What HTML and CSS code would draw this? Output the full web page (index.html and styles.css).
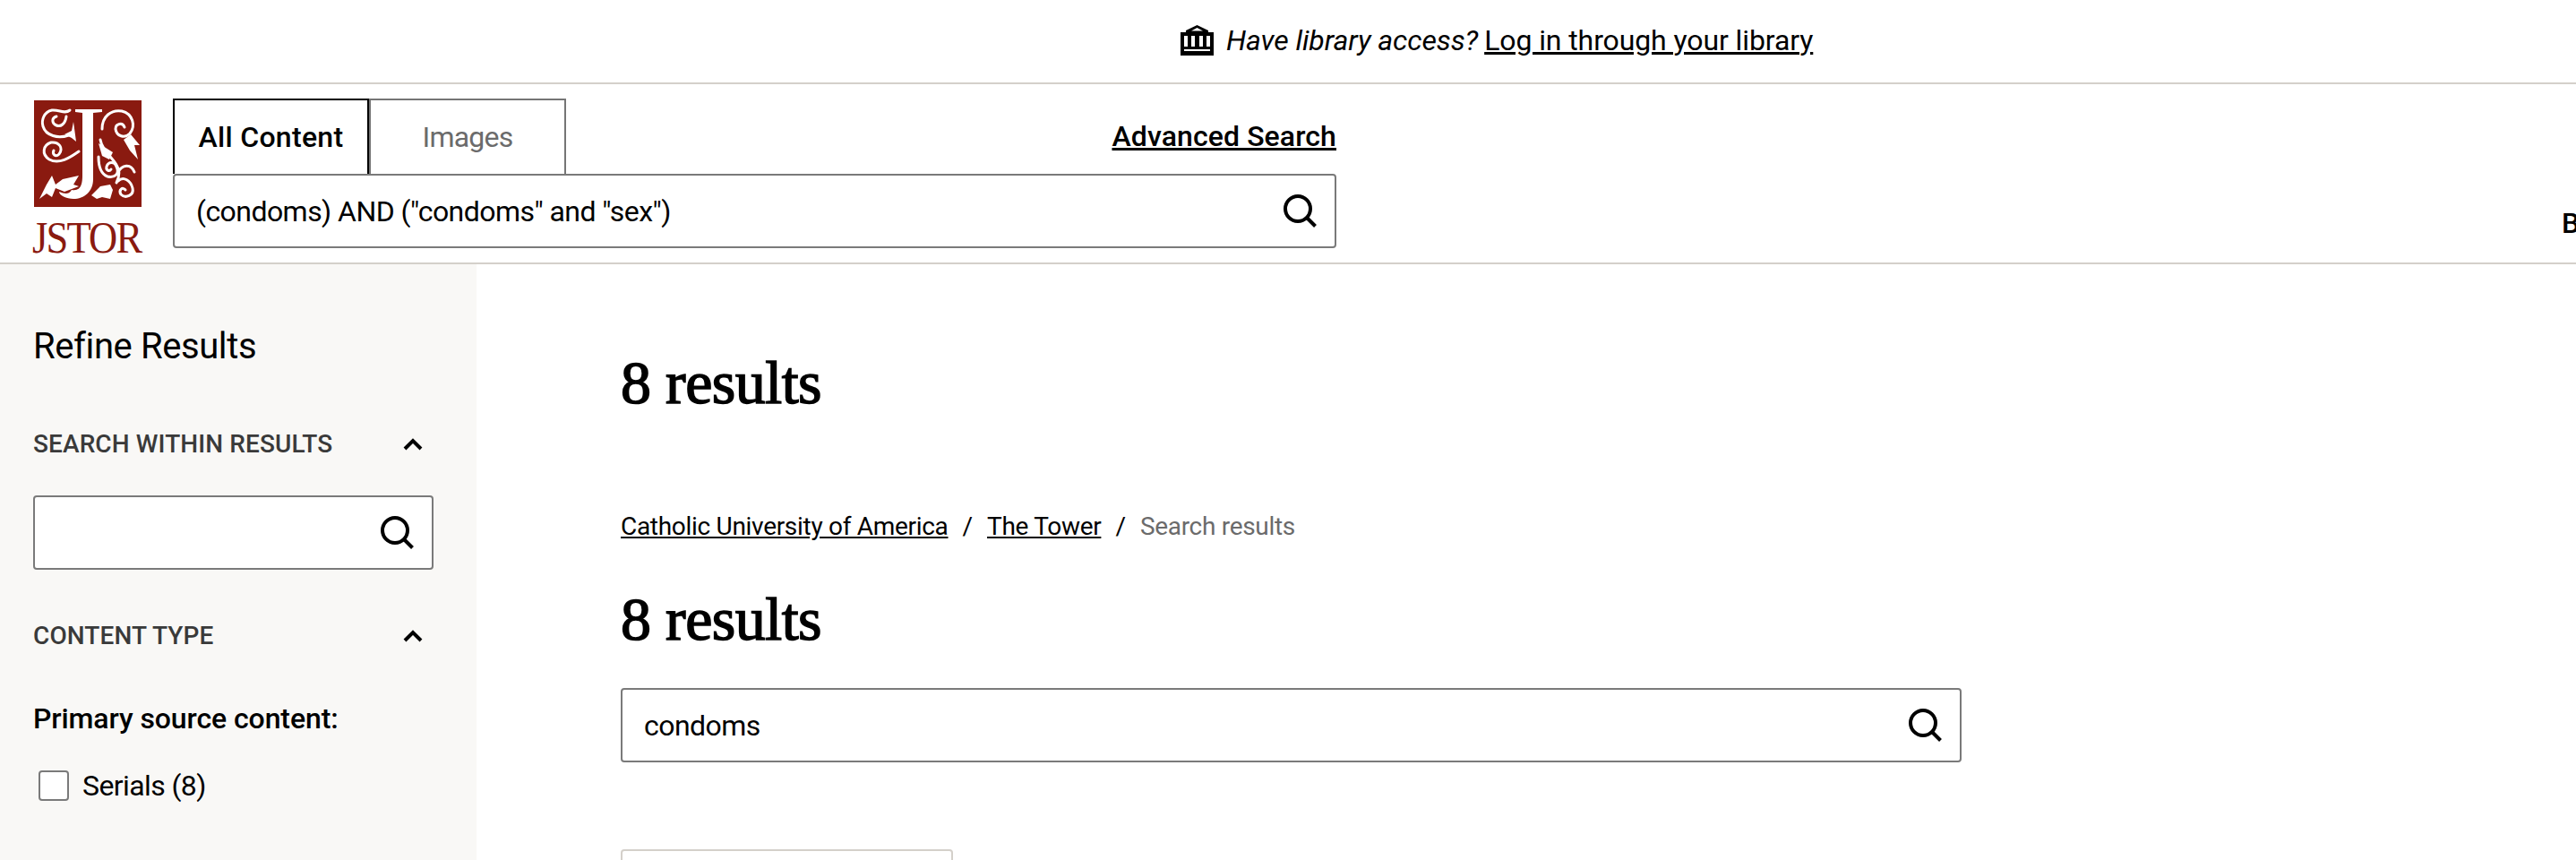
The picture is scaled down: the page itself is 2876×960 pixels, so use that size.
FILE: index.html
```html
<!DOCTYPE html>
<html lang="en">
<head>
    <meta charset="UTF-8">
    <meta name="viewport" content="width=device-width, initial-scale=1.0">
    <title>Search results - JSTOR</title>
    <link rel="stylesheet" href="styles.css">
</head>
<body>
    <svg class="icon-defs" width="0" height="0">
        <symbol id="icon-search" viewBox="0 0 37 37">
            <circle cx="16" cy="16" r="14" fill="none" stroke="currentColor" stroke-width="4"/>
            <path d="M26 26 L35.500 35.500" fill="none" stroke="currentColor" stroke-width="4"/>
        </symbol>
        <symbol id="icon-chevron" viewBox="0 0 22 14">
            <path d="M2 12 L11 3 L20 12" fill="none" stroke="currentColor" stroke-width="4"/>
        </symbol>
    </svg>

    <div class="library-bar">
        <svg class="library-icon" viewBox="0 0 37 34" width="37" height="34">
            <path d="M18.500 0 L31 6 L31 8 L37 8 L37 34 L0 34 L0 8 L6 8 L6 6 Z" fill="#000"/>
            <path d="M18.500 3 L25 6.500 L12 6.500 Z M4 12 L8 12 L8 24 L4 24 Z M12 12 L16 12 L16 24 L12 24 Z M21 12 L25 12 L25 24 L21 24 Z M29 12 L33 12 L33 24 L29 24 Z M4 27 L33 27 L33 29 L4 29 Z" fill="#fff"/>
        </svg>
        <em class="library-text">Have library access?</em>
        <a class="library-link" href="#">Log in through your library</a>
    </div>

    <header class="site-header">
        <a class="logo" href="#">
            <svg class="logo-mark" viewBox="0 0 120 119" width="120" height="119">
                <rect width="120" height="119" fill="#8a1a10"/>
                <g fill="none" stroke="#fff" stroke-width="3" stroke-linecap="round">
                    <path d="M40 11 C34 16 28 10 20 11 C11 13 8 22 10 29 C13 39 26 44 42 38"/>
                    <path d="M36 18 C35 26 30 30 25 28 C20 26 19 20 25 18"/>
                    <path d="M50 57 C40 64 28 72 17 66 C8 60 10 50 19 47 C28 46 33 53 28 60 C24 64 20 60 22 56"/>
                    <path d="M76 32 C76 18 86 10 98 12 C110 15 114 28 107 37 C101 43 92 40 91 32 C91 26 99 24 101 30"/>
                    <path d="M74 44 C76 56 86 62 92 72 C96 78 96 84 92 92"/>
                    <path d="M72 63 C72 72 74 82 82 85 C90 87 96 82 92 74 C90 68 83 68 81 74 C80 78 84 80 86 77"/>
                    <path d="M94 80 C98 72 108 70 112 80"/>
                    <path d="M94 90 C100 84 108 90 110 98 C112 106 102 110 97 105 C94 100 99 96 102 100"/>
                </g>
                <g fill="#fff">
                    <path d="M44 24 L47 46 L42 42 L34 38 L42 34 Z"/>
                    <path d="M108 38 L118 50 L112 50 L116 66 L107 56 L100 44 Z"/>
                    <path d="M72 48 L88 58 L84 66 L76 62 Z"/>
                    <path d="M6 110 L14 94 L20 84 L24 94 L32 88 L50 84 L44 94 L50 96 L34 102 L24 98 L20 108 L14 104 Z"/>
                    <path d="M64 106 L74 96 L85 94 L88 100 L85 110 L76 108 L70 110 Z"/>
                </g>
                <path d="M46 10 L76 10 L76 13 L66 14 L66 88 C66 102 56 110 44 110 C36 110 28 106 28 102 C34 104 38 106 42 100 C53 102 54 92 54 84 L54 14 L46 13 Z" fill="#fff"/>
            </svg>
            <span class="logo-name">JSTOR</span>
        </a>
        <div class="search-area">
            <div class="search-tabs">
                <a class="tab tab-active" href="#">All Content</a>
                <a class="tab" href="#">Images</a>
                <a class="advanced-link" href="#">Advanced Search</a>
            </div>
            <div class="search-box header-search">
                <span class="search-value">(condoms) AND ("condoms" and "sex")</span>
                <svg class="search-icon"><use href="#icon-search"/></svg>
            </div>
        </div>
        <a class="browse-link" href="#">Browse</a>
    </header>

    <div class="page">
        <aside class="sidebar">
            <h2 class="refine-title">Refine Results</h2>

            <div class="filter-head">
                <span>SEARCH WITHIN RESULTS</span>
                <svg class="chevron"><use href="#icon-chevron"/></svg>
            </div>
            <div class="search-box sidebar-search">
                <svg class="search-icon"><use href="#icon-search"/></svg>
            </div>

            <div class="filter-head content-head">
                <span>CONTENT TYPE</span>
                <svg class="chevron"><use href="#icon-chevron"/></svg>
            </div>
            <p class="filter-label">Primary source content:</p>
            <label class="check-row">
                <span class="check-box"></span>
                <span>Serials (8)</span>
            </label>
        </aside>

        <main class="results">
            <h1 class="results-title top-title">8 results</h1>

            <nav class="breadcrumb">
                <a href="#">Catholic University of America</a>
                <span class="crumb-sep">/</span>
                <a href="#">The Tower</a>
                <span class="crumb-sep">/</span>
                <span class="crumb-current">Search results</span>
            </nav>

            <h1 class="results-title second-title">8 results</h1>

            <div class="search-box results-search">
                <span class="search-value">condoms</span>
                <svg class="search-icon"><use href="#icon-search"/></svg>
            </div>

            <div class="sort-box"></div>
        </main>
    </div>
</body>
</html>
```

FILE: styles.css
```css
* {
    box-sizing: border-box;
}

html,
body {
    height: 100%;
    overflow: hidden;
}

body {
    margin: 0;
    padding: 0;
    background-color: #fff;
    color: #000;
    font-family: Roboto, "Liberation Sans", sans-serif;
    font-size: 32px;
}

a {
    color: #000;
}

.icon-defs {
    display: block;
    height: 0;
}

/* top bar */
.library-bar {
    display: flex;
    align-items: center;
    height: 94px;
    padding-left: 1318px;
    padding-bottom: 3px;
    border-bottom: 2px solid #d4d0ca;
    white-space: nowrap;
    letter-spacing: -0.1px;
}

.library-icon {
    flex: none;
    margin-right: 14px;
}

.library-text {
    margin-right: 7px;
}

/* header */
.site-header {
    display: flex;
    height: 201px;
    border-bottom: 2px solid #d4d0ca;
    white-space: nowrap;
}

.logo {
    display: block;
    flex: none;
    width: 193px;
    padding: 18px 0 0 38px;
    text-decoration: none;
}

.logo-mark {
    display: block;
}

.logo-name {
    display: block;
    margin: 9px 0 0 -2px;
    color: #8a1a10;
    font-family: "Liberation Serif", serif;
    font-size: 50px;
    line-height: 50px;
    letter-spacing: -2px;
    transform: scaleX(0.89);
    transform-origin: left;
}

.search-area {
    flex: none;
    width: 1299px;
    padding-top: 16px;
}

.search-tabs {
    display: flex;
    align-items: stretch;
    height: 84px;
}

.tab {
    display: flex;
    align-items: center;
    justify-content: center;
    width: 220px;
    border: 2px solid #757575;
    border-bottom: none;
    color: #6b6b6b;
    letter-spacing: -0.8px;
    text-decoration: none;
}

.tab-active {
    width: 219px;
    border-color: #000;
    color: #000;
    font-weight: 500;
    letter-spacing: 0.3px;
}

.advanced-link {
    align-self: center;
    margin-left: auto;
    font-weight: 500;
    letter-spacing: 0.1px;
    text-decoration-thickness: 3px;
}

.search-box {
    display: flex;
    align-items: center;
    border: 2px solid #7a7a7a;
    border-radius: 4px;
    background-color: #fff;
    height: 83px;
    padding: 0 20px 0 24px;
}

.search-value {
    letter-spacing: -0.55px;
}

.search-icon {
    flex: none;
    width: 37px;
    height: 37px;
    margin-left: auto;
}

.browse-link {
    margin: 136px 0 0 1368px;
    font-weight: 500;
    text-decoration: none;
}

/* sidebar */
.page {
    display: flex;
    height: 665px;
}

.sidebar {
    flex: none;
    width: 532px;
    padding: 0 48px 0 37px;
    background-color: #f9f8f6;
}

.refine-title {
    margin: 68px 0 0;
    font-size: 40px;
    font-weight: 400;
    line-height: 48px;
    letter-spacing: -0.4px;
}

.filter-head {
    display: flex;
    align-items: center;
    justify-content: space-between;
    margin-top: 69px;
    padding-right: 12px;
    color: #3a3a3a;
    font-size: 28px;
    font-weight: 500;
    line-height: 32px;
    letter-spacing: 0.1px;
}

.chevron {
    flex: none;
    width: 22px;
    height: 14px;
    color: #000;
}

.sidebar-search {
    margin-top: 41px;
    width: 447px;
}

.content-head {
    margin-top: 58px;
}

.filter-label {
    margin: 58px 0 0;
    font-weight: 500;
    line-height: 36px;
    letter-spacing: -0.1px;
}

.check-row {
    display: flex;
    align-items: center;
    gap: 15px;
    margin: 39px 0 0 6px;
    line-height: 36px;
    letter-spacing: -0.6px;
}

.check-box {
    flex: none;
    width: 34px;
    height: 34px;
    border: 2px solid #7a7a7a;
    border-radius: 4px;
    background-color: #fff;
}

/* results */
.results {
    flex: 1;
    padding-left: 161px;
}

.results-title {
    margin: 0;
    font-family: "Liberation Serif", serif;
    font-size: 68px;
    font-weight: 400;
    line-height: 76px;
    letter-spacing: -0.5px;
    -webkit-text-stroke: 1.500px #000;
}

.top-title {
    margin-top: 94px;
}

.breadcrumb {
    display: flex;
    align-items: center;
    margin-top: 106px;
    font-size: 28px;
    line-height: 34px;
    letter-spacing: -0.3px;
    white-space: nowrap;
}

.crumb-sep {
    width: 43.500px;
    text-align: center;
}

.crumb-current {
    color: #6b6b6b;
}

.second-title {
    margin-top: 48px;
}

.results-search {
    width: 1497px;
    margin-top: 39px;
}

.sort-box {
    width: 371px;
    height: 60px;
    margin-top: 97px;
    border: 2px solid #d4d0ca;
    border-radius: 4px;
}
```
